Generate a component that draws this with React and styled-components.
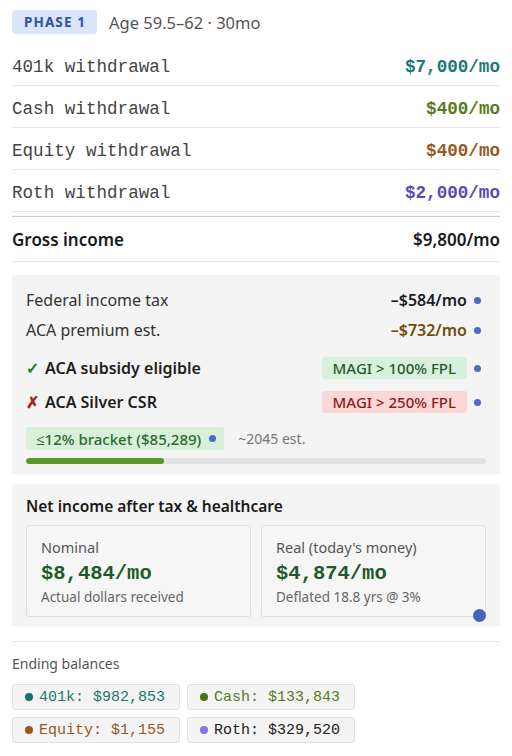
import React from "react";
import styled, { createGlobalStyle } from "styled-components";

const GlobalStyle = createGlobalStyle`
  body {
    margin: 0;
    background: #ffffff;
    font-family: "Noto Sans", "Open Sans", sans-serif;
    color: #222;
  }
`;

const SANS = `"Noto Sans", "Open Sans", sans-serif`;
const MONO = `"Liberation Mono", "DejaVu Sans Mono", monospace`;

const colors = {
  k401: "#1b7a70",
  cash: "#587a1c",
  equity: "#97591f",
  roth: "#5b4bb3",
  dot: "#4a6cc4",
  net: "#1f5a2a",
};

const withdrawals = [
  { label: "401k withdrawal", value: "$7,000/mo", color: colors.k401 },
  { label: "Cash withdrawal", value: "$400/mo", color: colors.cash },
  { label: "Equity withdrawal", value: "$400/mo", color: colors.equity },
  { label: "Roth withdrawal", value: "$2,000/mo", color: colors.roth },
];

const balances = [
  { label: "401k: $982,853", dot: "#13746a", text: "#1b7a70" },
  { label: "Cash: $133,843", dot: "#4f6f14", text: "#587a1c" },
  { label: "Equity: $1,155", dot: "#97591f", text: "#97591f" },
  { label: "Roth: $329,520", dot: "#8877dd", text: "#222" },
];

const App = () => {
  return (
    <>
      <GlobalStyle />
      <Page>
        <Header>
          <PhaseBadge>PHASE 1</PhaseBadge>
          <AgeText>Age 59.5–62 · 30mo</AgeText>
        </Header>

        <WithdrawalList>
          {withdrawals.map((w) => (
            <WithdrawalRow key={w.label}>
              <MonoLabel>{w.label}</MonoLabel>
              <MonoValue $color={w.color}>{w.value}</MonoValue>
            </WithdrawalRow>
          ))}
        </WithdrawalList>

        <GrossRow>
          <span>Gross income</span>
          <span>$9,800/mo</span>
        </GrossRow>

        {/* taxes & healthcare */}
        <TaxPanel>
          <TaxRow>
            <TaxLabel>Federal income tax</TaxLabel>
            <TaxValue>
              –$584/mo <Dot />
            </TaxValue>
          </TaxRow>
          <TaxRow>
            <TaxLabel>ACA premium est.</TaxLabel>
            <TaxValue $color="#6e4f0c">
              –$732/mo <Dot />
            </TaxValue>
          </TaxRow>
          <StatusRow $first>
            <StatusLabel>
              <Mark $color="#2a7a2e">✓</Mark> ACA subsidy eligible
            </StatusLabel>
            <TaxValue>
              <Tag $bg="#d8f1da" $color="#1f5e2a">MAGI &gt; 100% FPL</Tag>
              <Dot />
            </TaxValue>
          </StatusRow>
          <StatusRow>
            <StatusLabel>
              <Mark $color="#b01e1e">✗</Mark> ACA Silver CSR
            </StatusLabel>
            <TaxValue>
              <Tag $bg="#fbd8d6" $color="#8e1c1c">MAGI &gt; 250% FPL</Tag>
              <Dot />
            </TaxValue>
          </StatusRow>
          <BracketRow>
            <BracketPill>
              ≤12% bracket ($85,289) <Dot />
            </BracketPill>
            <EstText>~2045 est.</EstText>
          </BracketRow>
          <Track>
            <Fill style={{ width: "30%" }} />
          </Track>
        </TaxPanel>

        <NetPanel>
          <PanelTitle>Net income after tax &amp; healthcare</PanelTitle>
          <CardGrid>
            <Card>
              <CardLabel>Nominal</CardLabel>
              <NetValue>$8,484/mo</NetValue>
              <CardNote>Actual dollars received</CardNote>
            </Card>
            <Card>
              <CardLabel>Real (today's money)</CardLabel>
              <NetValue>$4,874/mo</NetValue>
              <CardNote>Deflated 18.8 yrs @ 3%</CardNote>
              <CornerDot />
            </Card>
          </CardGrid>
        </NetPanel>

        <Balances>
          <SmallHeading>Ending balances</SmallHeading>
          <PillGrid>
            {balances.map((b) => (
              <BalancePill key={b.label} $color={b.text}>
                <PillDot $color={b.dot} />
                {b.label}
              </BalancePill>
            ))}
          </PillGrid>
        </Balances>
      </Page>
    </>
  );
};

const Page = styled.div`
  width: 488px;
  padding: 10px 12px 12px;
`;

const Header = styled.div`
  display: flex;
  align-items: center;
  gap: 12px;
  height: 24px;
`;

const PhaseBadge = styled.span`
  background: #dbe5fb;
  color: #2d53ad;
  font-family: ${SANS};
  font-weight: 700;
  font-size: 13.5px;
  letter-spacing: 1.1px;
  padding: 0 11px 0 12px;
  height: 24px;
  line-height: 24px;
  border-radius: 4px;
`;

const AgeText = styled.span`
  font-family: ${SANS};
  font-size: 16.5px;
  color: #555;
`;

const WithdrawalList = styled.div`
  margin-top: 10px;
  display: flex;
  flex-direction: column;
`;

const WithdrawalRow = styled.div`
  display: flex;
  justify-content: space-between;
  align-items: center;
  height: 36px;
  padding-top: 5px;
  border-bottom: 1px solid #e6e6e6;
`;

const MonoLabel = styled.span`
  font-family: ${MONO};
  font-size: 17.6px;
  color: #444;
`;

const MonoValue = styled.span`
  font-family: ${MONO};
  font-size: 17.6px;
  font-weight: 700;
  color: ${({ $color }) => $color};
`;

const GrossRow = styled.div`
  margin-top: 4px;
  display: flex;
  justify-content: space-between;
  align-items: center;
  height: 44px;
  border-top: 1px solid #cfcfcf;
  border-bottom: 1px solid #e6e6e6;
  font-family: ${SANS};
  font-size: 17px;
  font-weight: 600;
  color: #1a1a1a;
`;

const Panel = styled.section`
  background: #f4f4f4;
  border-radius: 3px;
  padding: 10px 14px 11px;
  display: flex;
  flex-direction: column;
`;

const TaxPanel = styled(Panel)`
  margin-top: 13px;
`;

const NetPanel = styled(Panel)`
  margin-top: 9px;
  padding: 12px 14px 10px;
  gap: 9px;
`;

const TaxRow = styled.div`
  display: flex;
  justify-content: space-between;
  align-items: center;
  height: 30px;
`;

const TaxLabel = styled.span`
  font-family: ${SANS};
  font-size: 16px;
  color: #333;
`;

const TaxValue = styled.span`
  display: flex;
  align-items: center;
  gap: 7px;
  padding-right: 5px;
  font-family: ${SANS};
  font-size: 16px;
  font-weight: 600;
  color: ${({ $color }) => $color || "#1e1e1e"};
`;

const Dot = styled.span`
  display: inline-block;
  width: 7px;
  height: 7px;
  border-radius: 50%;
  background: ${colors.dot};
`;

const StatusRow = styled(TaxRow)`
  height: 34px;
  margin-top: ${({ $first }) => ($first ? "6px" : "0")};
`;

const StatusLabel = styled.span`
  font-family: ${SANS};
  font-size: 16px;
  font-weight: 600;
  color: #1e1e1e;
  display: flex;
  gap: 6px;
  align-items: center;
`;

const Mark = styled.span`
  color: ${({ $color }) => $color};
  font-weight: 600;
`;

const Tag = styled.span`
  background: ${({ $bg }) => $bg};
  color: ${({ $color }) => $color};
  font-family: ${SANS};
  font-size: 15px;
  font-weight: 500;
  padding: 0 11px;
  height: 22px;
  line-height: 22px;
  border-radius: 3px;
`;

const BracketRow = styled.div`
  display: flex;
  align-items: center;
  gap: 14px;
  margin-top: 8px;
`;

const BracketPill = styled.span`
  display: flex;
  align-items: center;
  gap: 8px;
  background: #d7f0d9;
  color: #2d6a2d;
  font-family: ${SANS};
  font-size: 15px;
  font-weight: 500;
  padding: 0 8px 0 10px;
  height: 23px;
  border-radius: 3px;
`;

const EstText = styled.span`
  font-family: ${SANS};
  font-size: 14px;
  color: #777;
`;

const Track = styled.div`
  margin-top: 8px;
  height: 6px;
  background: #e2e2e2;
  border-radius: 3px;
  overflow: hidden;
`;

const Fill = styled.div`
  height: 100%;
  background: #5a9626;
  border-radius: 3px;
`;

const PanelTitle = styled.h3`
  margin: 0;
  font-family: ${SANS};
  font-size: 15.5px;
  font-weight: 600;
  color: #1a1a1a;
  line-height: 20px;
`;

const CardGrid = styled.div`
  display: grid;
  grid-template-columns: 1fr 1fr;
  gap: 10px;
`;

const Card = styled.div`
  position: relative;
  background: #f6f6f6;
  border: 1px solid #dedede;
  border-radius: 3px;
  padding: 12px 14px 10px;
  display: flex;
  flex-direction: column;
`;

const CardLabel = styled.span`
  font-family: ${SANS};
  font-size: 14.5px;
  color: #555;
  line-height: 19px;
`;

const NetValue = styled.span`
  font-family: ${MONO};
  font-size: 20.5px;
  font-weight: 700;
  color: ${colors.net};
  line-height: 30px;
  margin-top: 2px;
`;

const CardNote = styled.span`
  font-family: ${SANS};
  font-size: 13.5px;
  color: #666;
  line-height: 17px;
`;

const CornerDot = styled.span`
  position: absolute;
  right: -1px;
  bottom: -6px;
  width: 13px;
  height: 13px;
  border-radius: 50%;
  background: #4364bf;
`;

const Balances = styled.div`
  margin-top: 14px;
  border-top: 1px solid #e6e6e6;
  padding-top: 13px;
`;

const SmallHeading = styled.div`
  font-family: ${SANS};
  font-size: 14px;
  color: #555;
  line-height: 18px;
`;

const PillGrid = styled.div`
  margin-top: 11px;
  display: grid;
  grid-template-columns: repeat(2, max-content);
  gap: 7px 7px;
`;

const BalancePill = styled.span`
  display: flex;
  align-items: center;
  gap: 6px;
  width: 142px;
  height: 24px;
  padding: 0 12px;
  background: #f4f4f4;
  border: 1px solid #e2e2e2;
  border-radius: 3px;
  font-family: ${MONO};
  font-size: 15px;
  color: ${({ $color }) => $color};
`;

const PillDot = styled.span`
  width: 8px;
  height: 8px;
  border-radius: 50%;
  background: ${({ $color }) => $color};
`;

export default App;
